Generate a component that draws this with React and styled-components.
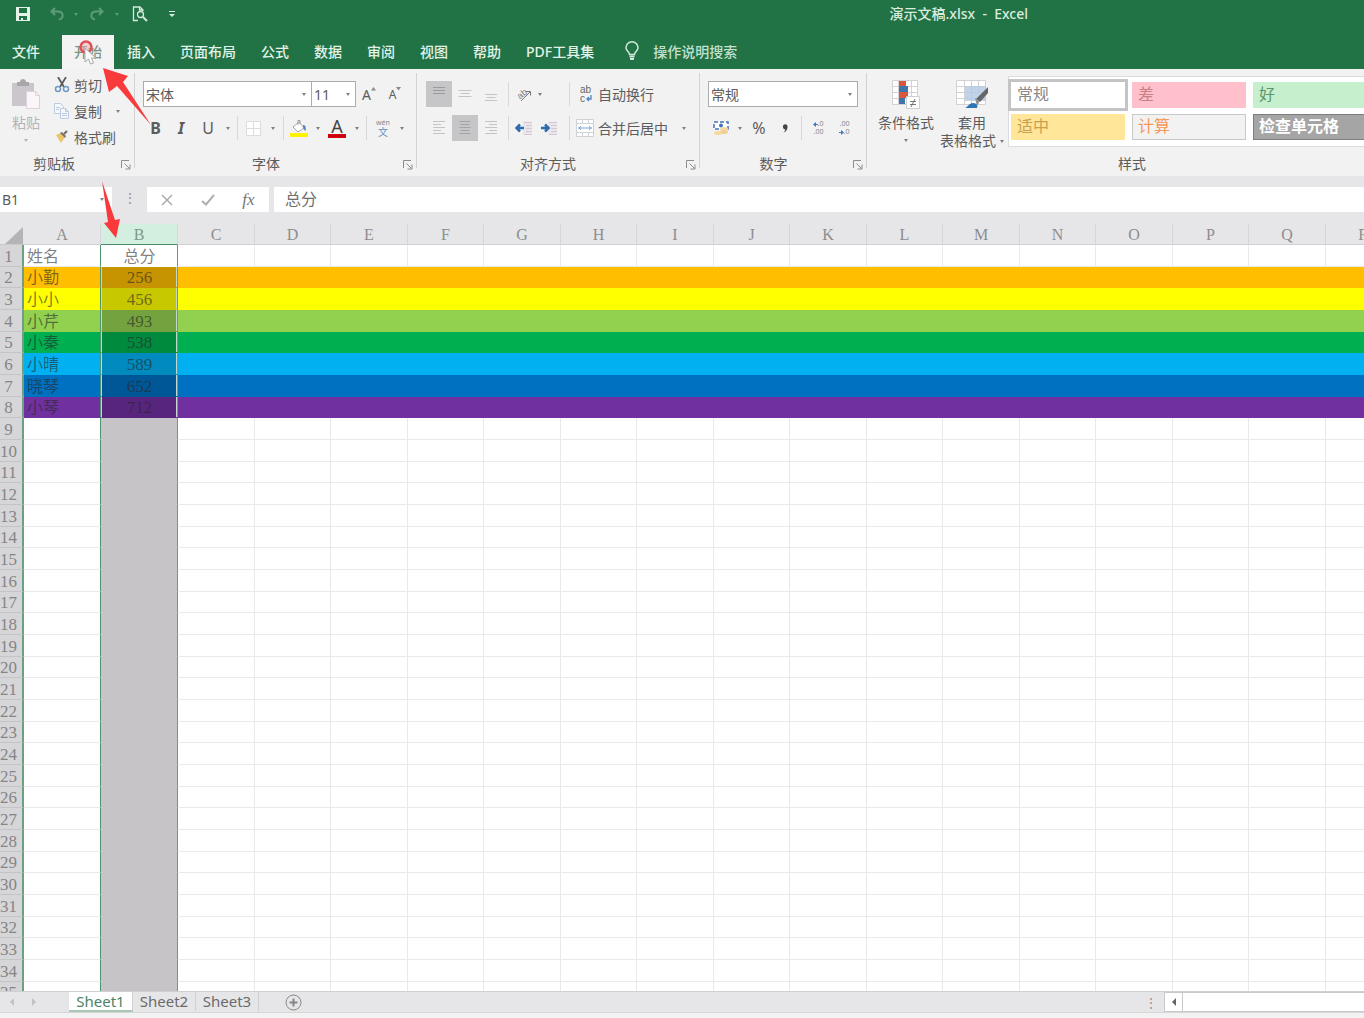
import React, { useEffect, useState } from "react";
import styled, { createGlobalStyle } from "styled-components";

const tabs = ["插入", "页面布局", "公式", "数据", "审阅", "视图", "帮助", "PDF工具集"];

const letters = "ABCDEFGHIJKLMNOPQRSTUVWXYZ".split("");

const records = [
  { name: "姓名", score: "总分" },
  { name: "小勤", score: "256", fill: "#ffbf00", picked: "#c69400" },
  { name: "小小", score: "456", fill: "#ffff00", picked: "#c8c800" },
  { name: "小芹", score: "493", fill: "#92d050", picked: "#73a23f" },
  { name: "小秦", score: "538", fill: "#00b050", picked: "#008a3e" },
  { name: "小晴", score: "589", fill: "#00b0f0", picked: "#008abd" },
  { name: "晓琴", score: "652", fill: "#0070c0", picked: "#005797" },
  { name: "小琴", score: "712", fill: "#7030a0", picked: "#58257e" },
];

const cellStyles = [
  { label: "常规", fill: "#fff", color: "#8a8a8a", active: true },
  { label: "差", fill: "#ffc0cb", color: "#c98088" },
  { label: "好", fill: "#c6efce", color: "#5f9468" },
  { label: "适中", fill: "#ffe699", color: "#c9a050" },
  { label: "计算", fill: "#f2f2f2", color: "#f5965a", edge: "#c9c9cb" },
  { label: "检查单元格", fill: "#a5a5a5", color: "#fff", edge: "#7d7d7d", bold: true },
];

// only as many rows and columns as the window can show
function useVisibleCells() {
  const measure = () => ({
    rows: Math.max(records.length, Math.ceil((window.innerHeight - 272) / 21.67)),
    cols: Math.min(letters.length, Math.ceil((window.innerWidth - 24) / 76.5)),
  });
  const [size, setSize] = useState(measure);
  useEffect(() => {
    const onResize = () => setSize(measure());
    window.addEventListener("resize", onResize);
    return () => window.removeEventListener("resize", onResize);
  }, []);
  return size;
}

function Lines({ widths, top, color = "#b9b9b9", center, right }) {
  return (
    <svg width="16" height="18" stroke={color}>
      {widths.map((w, i) => {
        const x = center ? (16 - w) / 2 : right ? 14 - w : 2;
        return <path key={i} d={`M${x} ${top + i * 3 + 0.5}h${w}`} />;
      })}
    </svg>
  );
}

function Caret({ w }) {
  return (
    <Slot w={w} as="span">
      <Triangle />
    </Slot>
  );
}

function Launcher() {
  return (
    <LaunchButton aria-label="对话框启动器">
      <svg width="10" height="10" fill="none" stroke="#8c8c8c">
        <path d="M.5 8V.5H8M3.5 3.5l5 5M9 4.5v4.500H4.500" />
      </svg>
    </LaunchButton>
  );
}

function TitleBar() {
  return (
    <Title>
      <QuickButton w={46} aria-label="保存">
        <svg width="14" height="14" fill="#e4f3e9">
          <path fillRule="evenodd" d="M0 0h14v14H0zM3 1v5h8V1zM3 9v4h2v-2h2v2h4V9z" />
        </svg>
      </QuickButton>
      <QuickButton w={21} aria-label="撤消">
        <svg width="14" height="14" fill="none" stroke="#5d9c79" strokeWidth="2">
          <path d="M5 1L1.500 4.500 5 8M2 4.500h6c6 0 6 7 1 8" />
        </svg>
      </QuickButton>
      <QuickButton w={18} aria-label="撤消列表"><Triangle color="#5d9c79" /></QuickButton>
      <QuickButton w={24} aria-label="恢复">
        <svg width="14" height="14" fill="none" stroke="#5d9c79" strokeWidth="2">
          <path d="M9 1l3.500 3.500L9 8M12 4.500H6c-6 0-6 7-1 8" />
        </svg>
      </QuickButton>
      <QuickButton w={15} aria-label="恢复列表"><Triangle color="#5d9c79" /></QuickButton>
      <QuickButton w={31} aria-label="打印预览">
        <svg width="16" height="16" fill="none" stroke="#d5eadd" strokeWidth="1.300">
          <path d="M6 14.500H1.500V1H8l3 3v1M7.500 1v3H11" />
          <circle cx="8.500" cy="8.500" r="3" />
          <path d="M11 11l4 4" strokeWidth="2" />
        </svg>
      </QuickButton>
      <QuickButton w={33} aria-label="自定义快速访问工具栏">
        <svg width="6" height="7" fill="#d5eadd">
          <path d="M0 0h6v1H0zM0 3h6L3 6z" />
        </svg>
      </QuickButton>
      <DocName>演示文稿.xlsx&nbsp; - &nbsp;Excel</DocName>
    </Title>
  );
}

function TabBar() {
  return (
    <Tabs>
      <FileTab>文件</FileTab>
      <ActiveTab>
        开始
        <Pointer width="24" height="30">
          <circle cx="9" cy="10" r="5.500" fill="#f5a9a9" fillOpacity=".5" stroke="#e0505a" strokeWidth="2.500" />
          <path d="M8 11v14l3.500-3 2 5 3-1-2-5h4.500z" fill="#fafafa" stroke="#a9a9a9" />
        </Pointer>
      </ActiveTab>
      {tabs.map((tab) => (
        <Tab key={tab}>{tab}</Tab>
      ))}
      <Tell>
        <svg width="14" height="20" fill="none" stroke="#cfe8d8" strokeWidth="1.500">
          <path d="M4.500 13.500C4.500 11 1 10 1 6.800a6 6 0 0112 0C13 10 9.500 11 9.500 13.500z" />
          <path d="M4.500 15.500h5M5 18h4" strokeWidth="2" />
        </svg>
        操作说明搜索
      </Tell>
    </Tabs>
  );
}

function Clipboard() {
  return (
    <Group w={134}>
      <ClipBody>
        <BigButton w={52} faded>
          <svg width="30" height="30">
            <path d="M1 4h22v23H1z" fill="#cbc6cb" />
            <path d="M6 3h3c0-4 6-4 6 0h3v4H6z" fill="#a9a5a9" />
            <path d="M15.500 12.500h9l4 4v13h-13z" fill="#fbf5fa" stroke="#dcd3da" />
            <path d="M24.500 12.500v4h4" fill="none" stroke="#dcd3da" />
          </svg>
          <span>粘贴</span>
          <Triangle color="#b5b5b5" />
        </BigButton>
        <ClipList>
          <TextButton>
            <svg width="16" height="16" fill="none">
              <path d="M4 0l6 10M12 0L6 10" stroke="#5c5c5c" strokeWidth="1.800" />
              <circle cx="4" cy="12" r="2.500" stroke="#6f9ac4" strokeWidth="1.500" />
              <circle cx="12" cy="12" r="2.500" stroke="#6f9ac4" strokeWidth="1.500" />
            </svg>
            剪切
          </TextButton>
          <TextButton>
            <svg width="16" height="16" fill="#f4f7fc" stroke="#bccbe0">
              <path d="M.5.5h6l3 3v7h-9z" />
              <path d="M6.500 5.500h5l3 3v7h-8zM11.500 5.500v3h3M8 10.500h5M8 12.500h5M2 4.500h4M2 6.500h3" />
            </svg>
            复制
            <Caret w={24} />
          </TextButton>
          <TextButton>
            <svg width="16" height="16">
              <path d="M2 6l5-2 4 4-4 6z" fill="#efc56c" />
              <path d="M6 4l2-1 4 4-1 2z" fill="#7b7468" />
              <path d="M10 5l3-3" stroke="#6a6a6a" strokeWidth="2" />
            </svg>
            格式刷
          </TextButton>
        </ClipList>
      </ClipBody>
      <GroupLabel shift={26}>剪贴板<Launcher /></GroupLabel>
    </Group>
  );
}

function FontGroup() {
  return (
    <Group w={281}>
      <Body left={8}>
        <Row>
          <Picker w={169}>
            <select aria-label="字体"><option>宋体</option></select>
            <Triangle />
          </Picker>
          <Picker w={44} joined>
            <select aria-label="字号"><option>11</option></select>
            <Triangle />
          </Picker>
          <Slot w={26} aria-label="增大字号">
            <Grow size={14}>A</Grow>
            <RaisedMark width="5" height="4"><path d="M0 3.500L2.500 0 5 3.500z" /></RaisedMark>
          </Slot>
          <Slot w={26} aria-label="减小字号">
            <Grow size={12}>A</Grow>
            <RaisedMark width="5" height="4"><path d="M0 0h5L2.500 3.500z" /></RaisedMark>
          </Slot>
        </Row>
        <Row>
          <Slot w={25}><Glyph bold>B</Glyph></Slot>
          <Slot w={26}><Glyph bold italic>I</Glyph></Slot>
          <Slot w={28}><Glyph>U</Glyph></Slot>
          <Caret w={12} />
          <Split w={7} />
          <Slot w={25} aria-label="边框">
            <svg width="15" height="15" fill="#fff" stroke="#dcdcdc">
              <path d="M.5.5h14v14H.5zM7.500 1v13M1 7.500h13" />
            </svg>
          </Slot>
          <Caret w={14} />
          <Split w={6} />
          <Slot w={25} aria-label="填充颜色">
            <svg width="18" height="18">
              <path d="M3 8l6-5 5 6-6 4z" fill="#fff" stroke="#a5a5b0" />
              <path d="M8 6V1.500h2V5" fill="none" stroke="#9a9a9a" />
              <path d="M13 6c3 0 3 3 2.500 6-2-1-2.500-3-2.500-6z" fill="#5b82b5" />
              <path d="M0 14h18v4H0z" fill="#fff200" />
            </svg>
          </Slot>
          <Caret w={13} />
          <Slot w={26} aria-label="字体颜色">
            <FontColor>A</FontColor>
          </Slot>
          <Caret w={13} />
          <Split w={7} />
          <Slot w={26}><Pinyin><small>wén</small>文</Pinyin></Slot>
          <Caret w={12} />
        </Row>
      </Body>
      <GroupLabel shift={19}>字体<Launcher /></GroupLabel>
    </Group>
  );
}

function Indent({ flip }) {
  return (
    <svg width="18" height="14">
      <path d="M8 .5h9v13H8z" fill="#ebe6eb" />
      <path d="M9 1.500h8M11 4.500h6M11 7.500h6M11 10.500h6M9 13.500h8" stroke="#d2c9d2" />
      <path d={flip ? "M1 7h7M5 3.500L8.500 7 5 10.500" : "M2 7h7M5 3.500L1.500 7 5 10.500"} fill="none" stroke="#2b6cb0" strokeWidth="2.500" />
    </svg>
  );
}

function AlignGroup() {
  return (
    <Group w={282}>
      <Body left={9}>
        <Row>
          <Slot w={26} on aria-label="顶端对齐"><Lines center widths={[12, 12, 12]} top={2} color="#9a9a9a" /></Slot>
          <Slot w={26} aria-label="垂直居中"><Lines center widths={[13, 9, 13]} top={5} color="#c4c4c4" /></Slot>
          <Slot w={26} aria-label="底端对齐"><Lines center widths={[12, 9, 12]} top={9} color="#c4c4c4" /></Slot>
          <Split w={8} />
          <Slot w={24} aria-label="方向">
            <svg width="20" height="20" fill="none" stroke="#777">
              <text x="3" y="13" fontSize="9" fontFamily="Liberation Sans" fill="#777" stroke="none" transform="rotate(-40 8 10)">ab</text>
              <path d="M7 17L16 8M12 7.500h4.500v4" />
            </svg>
          </Slot>
          <Caret w={8} />
          <Spacer w={18} />
          <Split w={14} />
          <TextButton>
            <svg width="18" height="20" fontFamily="Liberation Sans" fontSize="10" fill="#686868">
              <text x="4" y="9">ab</text>
              <text x="4" y="18">c</text>
              <path d="M15 11v4h-4M13 13l-2 2 2 2" fill="none" stroke="#4f83c0" strokeWidth="1.300" />
            </svg>
            自动换行
          </TextButton>
        </Row>
        <Row>
          <Slot w={26} aria-label="左对齐"><Lines widths={[12, 8, 12, 8, 12]} top={2} color="#c4c4c4" /></Slot>
          <Slot w={26} on aria-label="居中"><Lines center widths={[11, 9, 11, 9, 11]} top={2} color="#a4a4a4" /></Slot>
          <Slot w={26} aria-label="右对齐"><Lines right widths={[12, 8, 12, 8, 12]} top={2} color="#c4c4c4" /></Slot>
          <Split w={8} />
          <Slot w={24} aria-label="减少缩进量"><Indent /></Slot>
          <Slot w={26} aria-label="增加缩进量"><Indent flip /></Slot>
          <Split w={14} />
          <TextButton>
            <svg width="18" height="18" fill="#fff" stroke="#d0d0d6">
              <path d="M.5.5h17v17H.5zM.5 4.500h17M.5 13.500h17M6.500.5v4M12.500.5v4M6.500 13.500v4M12.500 13.500v4" />
              <path d="M2 9h14M5 7L3 9l2 2M13 7l2 2-2 2" fill="none" stroke="#7ba4d0" />
            </svg>
            合并后居中
            <Caret w={24} />
          </TextButton>
        </Row>
      </Body>
      <GroupLabel shift={20}>对齐方式<Launcher /></GroupLabel>
    </Group>
  );
}

function NumberGroup() {
  return (
    <Group w={166}>
      <Body left={8}>
        <Row>
          <Picker w={150}>
            <select aria-label="数字格式"><option>常规</option></select>
            <Triangle />
          </Picker>
        </Row>
        <Row>
          <Slot w={26} aria-label="会计数字格式">
            <svg width="16" height="16">
              <path d="M1 2h14v7H1z" fill="#fff" stroke="#4472b8" strokeWidth="1.500" strokeDasharray="4 2" />
              <circle cx="8" cy="5.500" r="2" fill="#4472b8" />
              <ellipse cx="11" cy="9" rx="4" ry="2" fill="#f5d9a0" />
              <ellipse cx="11" cy="12" rx="4" ry="2" fill="#f0cf90" />
              <ellipse cx="5" cy="13" rx="4" ry="2" fill="#f5d9a0" />
            </svg>
          </Slot>
          <Caret w={12} />
          <Slot w={26}><Glyph>%</Glyph></Slot>
          <Slot w={26} aria-label="千位分隔样式">
            <svg width="6" height="9" fill="#444">
              <path d="M1 3a2.300 2.300 0 114.500 0c0 3-1.500 4.500-4 5.500 1-1 1.800-2 1.800-3C2 5.500 1 4.500 1 3z" />
            </svg>
          </Slot>
          <Split w={7} />
          <Slot w={26} aria-label="增加小数位数">
            <Decimals><span><LeftArrow />.0</span><span>.00</span></Decimals>
          </Slot>
          <Slot w={26} aria-label="减少小数位数">
            <Decimals><span>.00</span><span><RightArrow />.0</span></Decimals>
          </Slot>
        </Row>
      </Body>
      <GroupLabel shift={19}>数字<Launcher /></GroupLabel>
    </Group>
  );
}

function LeftArrow() {
  return <svg width="5" height="5" fill="#3f78c0"><path d="M0 2.500L3 0v2h2v1H3v2z" /></svg>;
}

function RightArrow() {
  return <svg width="5" height="5" fill="#3f78c0"><path d="M5 2.500L2 0v2H0v1h2v2z" /></svg>;
}

function StyleGroup() {
  return (
    <Group w={530}>
      <StyleBody>
        <BigButton w={78}>
          <svg width="30" height="30">
            <path d="M1.500 1.500h25v24h-25zM1.500 7.500h25M1.500 13.500h25M1.500 19.500h25M7.500 1.500v24M20.500 1.500v24" fill="#fff" stroke="#d4d0d4" />
            <path d="M8 2h7v5H8zM8 13h9v6H8z" fill="#d9573c" />
            <path d="M8 7h9v6H8zM8 19h6v6H8z" fill="#3f74ad" />
            <path d="M15.500 17.500h13v12h-13z" fill="#fff" stroke="#d0d0d0" />
            <path d="M19 22.500h6M19 25.500h6M24 20l-4 8" stroke="#777" />
          </svg>
          <span>条件格式</span>
          <Triangle />
        </BigButton>
        <BigButton w={54}>
          <svg width="34" height="30">
            <path d="M1.500 1.500h29v24h-29zM1.500 7.500h29M1.500 13.500h29M1.500 19.500h29M9.500 1.500v24M16.500 1.500v24M23.500 1.500v24" fill="#fff" stroke="#d4d0d4" />
            <path d="M10 7h21v15H10z" fill="#b5cbe4" fillOpacity=".85" />
            <path d="M33 8v6l-8 9-4-3z" fill="#666" />
            <path d="M20 19l4 4-2 4z" fill="#8a8a8a" />
            <path d="M10 29c3-1 4-5 8-5s5 3 4 5z" fill="#2e75b6" />
          </svg>
          <span>套用</span>
          <BottomLine>表格格式<Triangle /></BottomLine>
        </BigButton>
        <Gallery>
          {cellStyles.map((s) => (
            <StyleCell key={s.label} fill={s.fill} ink={s.color} edge={s.edge} active={s.active} bold={s.bold}>
              {s.label}
            </StyleCell>
          ))}
        </Gallery>
      </StyleBody>
      <GroupLabel shift={0}>样式</GroupLabel>
    </Group>
  );
}

function FormulaBar() {
  return (
    <Formula>
      <NameBox>
        <input aria-label="名称框" defaultValue="B1" />
        <Triangle />
      </NameBox>
      <Grip w={35}>⋮</Grip>
      <FormulaTools>
        <Slot w={40} aria-label="取消">
          <svg width="12" height="12" stroke="#ababab" strokeWidth="1.500"><path d="M1 1l10 10M11 1L1 11" /></svg>
        </Slot>
        <Slot w={41} aria-label="输入">
          <svg width="14" height="12" fill="none" stroke="#b0b0b0" strokeWidth="2"><path d="M1 7l4 3.500L13 1" /></svg>
        </Slot>
        <Slot w={41}><Fx>fx</Fx></Slot>
      </FormulaTools>
      <FormulaInput aria-label="编辑栏" defaultValue="总分" />
    </Formula>
  );
}

function Sheet() {
  const size = useVisibleCells();
  const columns = letters.slice(0, size.cols);
  const rows = Array.from({ length: size.rows }, (_, i) => records[i] || {});

  return (
    <SheetArea>
      <Grid>
        <colgroup>
          <col className="head" />
          {columns.map((c) => <col key={c} />)}
        </colgroup>
        <thead>
          <tr>
            <Corner><svg width="18" height="17" fill="#b4b4b6"><path d="M18 0v17H0z" /></svg></Corner>
            {columns.map((c) => <ColHead key={c} scope="col" picked={c === "B"}>{c}</ColHead>)}
          </tr>
        </thead>
        <tbody>
          {rows.map((row, i) => (
            <tr key={i}>
              <RowHead scope="row">{i + 1}</RowHead>
              <Cell fill={row.fill} first>{row.name}</Cell>
              <PickedCell fill={row.picked} active={i === 0}>{row.score}</PickedCell>
              {columns.slice(2).map((c) => <Cell key={c} fill={row.fill} />)}
            </tr>
          ))}
        </tbody>
      </Grid>
    </SheetArea>
  );
}

function Footer() {
  return (
    <Bottom>
      <Slot w={24} aria-label="上一张"><Side dir="left" faded /></Slot>
      <Slot w={20} aria-label="下一张"><Side dir="right" faded /></Slot>
      <Spacer w={25} />
      <SheetTab active>Sheet1</SheetTab>
      <SheetTab>Sheet2</SheetTab>
      <SheetTab>Sheet3</SheetTab>
      <Slot w={68} aria-label="新工作表">
        <svg width="17" height="17" fill="none" stroke="#868686">
          <circle cx="8.500" cy="8.500" r="7.500" />
          <path d="M4.500 8.500h8M8.500 4.500v8" strokeWidth="2" />
        </svg>
      </Slot>
      <Scroll>
        <Grip w={26}>⋮</Grip>
        <ScrollButton aria-label="向左滚动"><Side dir="left" /></ScrollButton>
        <Track />
      </Scroll>
    </Bottom>
  );
}

function App() {
  return (
    <Page>
      <Global />
      <TitleBar />
      <TabBar />
      <Ribbon>
        <Clipboard />
        <Rule />
        <FontGroup />
        <Rule />
        <AlignGroup />
        <Rule />
        <NumberGroup />
        <Rule />
        <StyleGroup />
      </Ribbon>
      <FormulaBar />
      <Sheet />
      <Footer />
      <Annotation width="160" height="245" fill="#f93a3c">
        <path d="M103 68l25 8-5 6 28 43-34-39-8 6z" />
        <path d="M102 181l13 39 5-1-4 19-12-15 4-1z" />
      </Annotation>
    </Page>
  );
}

const sans = `"Noto Sans", "Noto Sans CJK SC", sans-serif`;
const song = `"Liberation Serif", "Noto Sans CJK SC", serif`;

const Global = createGlobalStyle`
  * {
    box-sizing: border-box;
  }
  body {
    margin: 0;
    background: #f2f2f3;
  }
  button, input, select {
    font: inherit;
    color: inherit;
    border: none;
    background: none;
    padding: 0;
    margin: 0;
    outline: none;
    border-radius: 0;
  }
  svg {
    flex: none;
  }
`;

const Page = styled.div`
  position: relative;
  display: flex;
  flex-direction: column;
  height: 100vh;
  padding-bottom: 5px;
  overflow: hidden;
  font-family: ${sans};
  font-size: 14px;
  color: #5c5c5c;
`;

const Title = styled.header`
  display: flex;
  align-items: center;
  flex: none;
  height: 28px;
  background: #217346;
`;

const QuickButton = styled.button.withConfig({ shouldForwardProp: (p) => p !== "w" })`
  width: ${(p) => p.w}px;
  height: 28px;
  display: flex;
  align-items: center;
  justify-content: center;
`;

const DocName = styled.div`
  margin-left: auto;
  margin-right: 336px;
  padding-bottom: 2px;
  color: #d9ecdf;
  font-weight: 500;
  white-space: nowrap;
`;

const Triangle = styled.span.withConfig({ shouldForwardProp: (p) => p !== "color" })`
  flex: none;
  border: 2px solid transparent;
  border-top: 3px solid ${(p) => p.color || "#808080"};
  border-bottom: none;
`;

const Tabs = styled.nav`
  display: flex;
  flex: none;
  padding-top: 7px;
  height: 41px;
  background: #217346;
`;

const Tab = styled.button`
  padding: 0 13px 2px 12px;
  color: #e3f2e8;
  font-weight: 500;
  white-space: nowrap;
`;

const FileTab = styled(Tab)`
  width: 62px;
  text-align: left;
`;

const ActiveTab = styled(Tab)`
  position: relative;
  width: 52px;
  margin-right: 1px;
  padding: 0 12px 2px;
  background: #f3f3f3;
  color: #7d9485;
`;

const Pointer = styled.svg`
  position: absolute;
  left: 15px;
  top: 2px;
`;

const Tell = styled(Tab)`
  display: flex;
  align-items: center;
  gap: 14px;
  padding-left: 18px;
  color: #c3e0ce;
`;

const Ribbon = styled.section`
  display: flex;
  flex: none;
  height: 107px;
  overflow: hidden;
  background: #f2f2f3;
`;

const Rule = styled.div`
  flex: none;
  width: 1px;
  margin: 4px 0 8px;
  background: #d2d2d4;
`;

const Group = styled.div.withConfig({ shouldForwardProp: (p) => p !== "w" })`
  flex: none;
  width: ${(p) => p.w}px;
  display: flex;
  flex-direction: column;
`;

const Body = styled.div`
  flex: 1;
  display: flex;
  flex-direction: column;
  gap: 8px;
  padding: 12px 0 0 ${(p) => p.left}px;
`;

const ClipBody = styled.div`
  flex: 1;
  display: flex;
`;

const StyleBody = styled.div`
  flex: 1;
  display: flex;
`;

const ClipList = styled.div`
  display: flex;
  flex-direction: column;
  padding: 3px 0 0 2px;
`;

const Row = styled.div`
  display: flex;
  align-items: center;
  height: 26px;
`;

const GroupLabel = styled.div.withConfig({ shouldForwardProp: (p) => p !== "shift" })`
  position: relative;
  height: 22px;
  line-height: 20px;
  padding-right: ${(p) => p.shift}px;
  text-align: center;
`;

const LaunchButton = styled.button`
  position: absolute;
  right: 3px;
  top: 6px;
  display: flex;
`;

const Slot = styled.button.withConfig({ shouldForwardProp: (p) => !["w", "on"].includes(p) })`
  && {
    background: ${(p) => (p.on ? "#c6c6c8" : "none")};
  }
  flex: none;
  display: flex;
  align-items: center;
  justify-content: center;
  width: ${(p) => p.w}px;
  height: 26px;
`;

const Spacer = styled.span.withConfig({ shouldForwardProp: (p) => p !== "w" })`
  flex: none;
  width: ${(p) => p.w}px;
`;

const Split = styled(Spacer)`
  height: 24px;
  background: linear-gradient(#d8d8da, #d8d8da) center / 1px 100% no-repeat;
`;

const TextButton = styled.button`
  display: flex;
  align-items: center;
  gap: 4px;
  height: 26px;
  white-space: nowrap;
`;

const BigButton = styled.button.withConfig({ shouldForwardProp: (p) => !["w", "faded"].includes(p) })`
  && {
    padding-top: 10px;
    color: ${(p) => (p.faded ? "#b3b3b5" : "inherit")};
  }
  flex: none;
  width: ${(p) => p.w}px;
  display: flex;
  flex-direction: column;
  align-items: center;
  line-height: 18px;
  white-space: nowrap;

  > span:nth-child(2) {
    margin-top: 5px;
  }
  > span:nth-child(3):empty {
    margin-top: 7px;
  }
`;

const BottomLine = styled.span`
  display: flex;
  align-items: center;
  gap: 4px;
`;

const Picker = styled.label.withConfig({ shouldForwardProp: (p) => !["w", "joined"].includes(p) })`
  display: flex;
  align-items: center;
  width: ${(p) => p.w}px;
  height: 26px;
  padding: 0 5px 0 2px;
  border: 1px solid #ababad;
  border-left-width: ${(p) => (p.joined ? 0 : 1)}px;
  background: #fff;

  select {
    flex: 1;
    min-width: 0;
    appearance: none;
  }
`;

const Glyph = styled.span.withConfig({ shouldForwardProp: (p) => !["bold", "italic"].includes(p) })`
  font-size: 16px;
  line-height: 24px;
  font-weight: ${(p) => (p.bold ? 700 : 400)};
  font-style: ${(p) => (p.italic ? "italic" : "normal")};
`;

const Grow = styled.span`
  font-size: ${(p) => p.size}px;
`;

const RaisedMark = styled.svg`
  margin-bottom: 11px;
  fill: #8a8a8a;
`;

const FontColor = styled.span`
  width: 18px;
  height: 19px;
  border-bottom: 4px solid #d00010;
  font-size: 18px;
  line-height: 15px;
  text-align: center;
  color: #444;
`;

const Pinyin = styled.span`
  display: flex;
  flex-direction: column;
  align-items: center;
  font-size: 10px;
  line-height: 10px;
  color: #5f93c8;

  small {
    font-size: 7px;
    line-height: 8px;
    color: #888;
  }
`;

const Decimals = styled.span`
  display: flex;
  flex-direction: column;
  font-size: 7px;
  line-height: 8px;
  color: #8a8a8a;

  span {
    display: flex;
    align-items: center;
    justify-content: flex-end;
  }
`;

const Gallery = styled.div`
  flex: 1;
  display: grid;
  grid-template-columns: repeat(3, 114px);
  grid-auto-rows: 26px;
  gap: 6px 7px;
  align-content: start;
  height: 71px;
  margin: 7px 0 0 9px;
  padding: 5px 2px;
  border: 1px solid #dcdcde;
  background: #fff;
`;

const StyleCell = styled.button.withConfig({
  shouldForwardProp: (p) => !["fill", "ink", "edge", "active", "bold"].includes(p),
})`
  && {
    padding-left: 5px;
    border: 1px solid ${(p) => p.edge || p.fill};
    background: ${(p) => p.fill};
    outline: ${(p) => (p.active ? "3px solid #c4c4c6" : "none")};
    color: ${(p) => p.ink};
    font-family: ${song};
    font-size: 16px;
    font-weight: ${(p) => (p.bold ? 700 : 400)};
  }
  line-height: 20px;
  text-align: left;
`;

const Formula = styled.section`
  display: flex;
  flex: none;
  height: 48px;
  padding: 11px 0 12px;
  background: #e6e6e8;
`;

const NameBox = styled.div`
  display: flex;
  align-items: center;
  width: 112px;
  padding: 0 8px 0 2px;
  background: #fff;

  input {
    flex: 1;
    min-width: 0;
  }
`;

const Grip = styled.span.withConfig({ shouldForwardProp: (p) => p !== "w" })`
  width: ${(p) => p.w}px;
  line-height: 22px;
  text-align: center;
  color: #999;
`;

const FormulaTools = styled.div`
  display: flex;
  margin-right: 5px;
  background: #fff;
`;

const Fx = styled.i`
  font-family: "Liberation Serif", serif;
  font-size: 17px;
  color: #777;
`;

const FormulaInput = styled.input`
  flex: 1;
  min-width: 0;
  && {
    padding: 0 0 4px 11px;
    background: #fff;
    font-size: 16px;
    color: #707070;
  }
`;

const SheetArea = styled.main`
  flex: 1;
  min-height: 0;
  overflow: hidden;
  background: #fff;
`;

const Grid = styled.table`
  table-layout: fixed;
  width: 0;
  border-spacing: 0;
  font-family: ${song};
  font-size: 16px;
  line-height: 18px;

  col {
    width: 77px;
  }
  col:nth-child(2n + 5) {
    width: 76px;
  }
  col.head {
    width: 24px;
  }
  tbody tr {
    height: 22px;
  }
  tbody tr:nth-child(3n + 2) {
    height: 21px;
  }
  th, td {
    padding: 2px 0 0;
    white-space: nowrap;
  }
`;

const Corner = styled.th`
  background: #e6e6e8;
  border-bottom: 1px solid #c9c9cb;

  svg {
    display: block;
    margin-left: 5px;
  }
`;

const ColHead = styled.th.withConfig({ shouldForwardProp: (p) => p !== "picked" })`
  height: 21px;
  border-right: 1px solid #d6d6d8;
  border-bottom: 1px solid ${(p) => (p.picked ? "#4a8c68" : "#d0d0d2")};
  background: ${(p) => (p.picked ? "#d2efdf" : "#e6e6e8")};
  color: ${(p) => (p.picked ? "#7d9a88" : "#8d8d8f")};
  font-weight: 400;
`;

const RowHead = styled.th`
  && {
    padding-right: 5px;
  }
  border-right: 2px solid #6f9f83;
  border-bottom: 1px solid #c4c4c6;
  background: #d6d5d7;
  color: #858587;
  font-size: 17px;
  font-weight: 400;
`;

const Cell = styled.td.withConfig({ shouldForwardProp: (p) => !["fill", "first"].includes(p) })`
  && {
    padding-left: ${(p) => (p.first ? 3 : 0)}px;
  }
  border-right: 1px solid ${(p) => (p.first ? "#4f9470" : p.fill || "#e9e9eb")};
  border-bottom: 1px solid ${(p) => p.fill || "#e9e9eb"};
  background: ${(p) => p.fill || "#fff"};
  color: rgba(40, 40, 40, 0.6);
`;

const PickedCell = styled.td.withConfig({ shouldForwardProp: (p) => !["fill", "active"].includes(p) })`
  border-right: 1px solid #5f9f7c;
  border-left: 1px solid ${(p) => (p.fill ? "#c3d8cb" : "transparent")};
  border-bottom: 1px solid ${(p) => p.fill || (p.active ? "#fff" : "#c7c4c7")};
  background: ${(p) => p.fill || (p.active ? "#fff" : "#c7c4c7")};
  box-shadow: ${(p) => (p.fill ? "inset -1px 0 #c3d8cb" : "none")};
  color: rgba(40, 40, 40, 0.6);
  font-size: ${(p) => (p.active ? 16 : 17)}px;
  text-align: center;
`;

const Bottom = styled.footer`
  display: flex;
  flex: none;
  height: 22px;
  border-top: 1px solid #cfcfd1;
  border-bottom: 1px solid #d6d6d8;
  background: #e6e6e8;

  > button {
    height: 20px;
  }
`;

const Side = styled.i.withConfig({ shouldForwardProp: (p) => !["dir", "faded"].includes(p) })`
  border: 4px solid transparent;
  border-${(p) => (p.dir === "left" ? "right" : "left")}-color: ${(p) => (p.faded ? "#c2c2c4" : "#666")};
  border-${(p) => p.dir}: none;
`;

const SheetTab = styled.button.withConfig({ shouldForwardProp: (p) => p !== "active" })`
  && {
    width: ${(p) => (p.active ? 64 : 63)}px;
    border-right: 1px solid #cfcfd1;
    border-bottom: 2px solid ${(p) => (p.active ? "#a9c7b5" : "transparent")};
    background: ${(p) => (p.active ? "#fff" : "none")};
    color: ${(p) => (p.active ? "#4a8565" : "#6b6b6b")};
    font-size: 15px;
    line-height: 18px;
  }
`;

const Scroll = styled.div`
  display: flex;
  width: 226px;
  margin-left: auto;
`;

const ScrollButton = styled.button`
  && {
    width: 19px;
    border: 1px solid #c9c9cb;
    background: #fff;
  }
  display: flex;
  align-items: center;
  justify-content: center;
`;

const Track = styled.div`
  flex: 1;
  border: 1px solid #c9c9cb;
  border-width: 1px 0;
  background: #fff;
`;

const Annotation = styled.svg`
  position: absolute;
  left: 0;
  top: 0;
  pointer-events: none;
`;

export default App;
